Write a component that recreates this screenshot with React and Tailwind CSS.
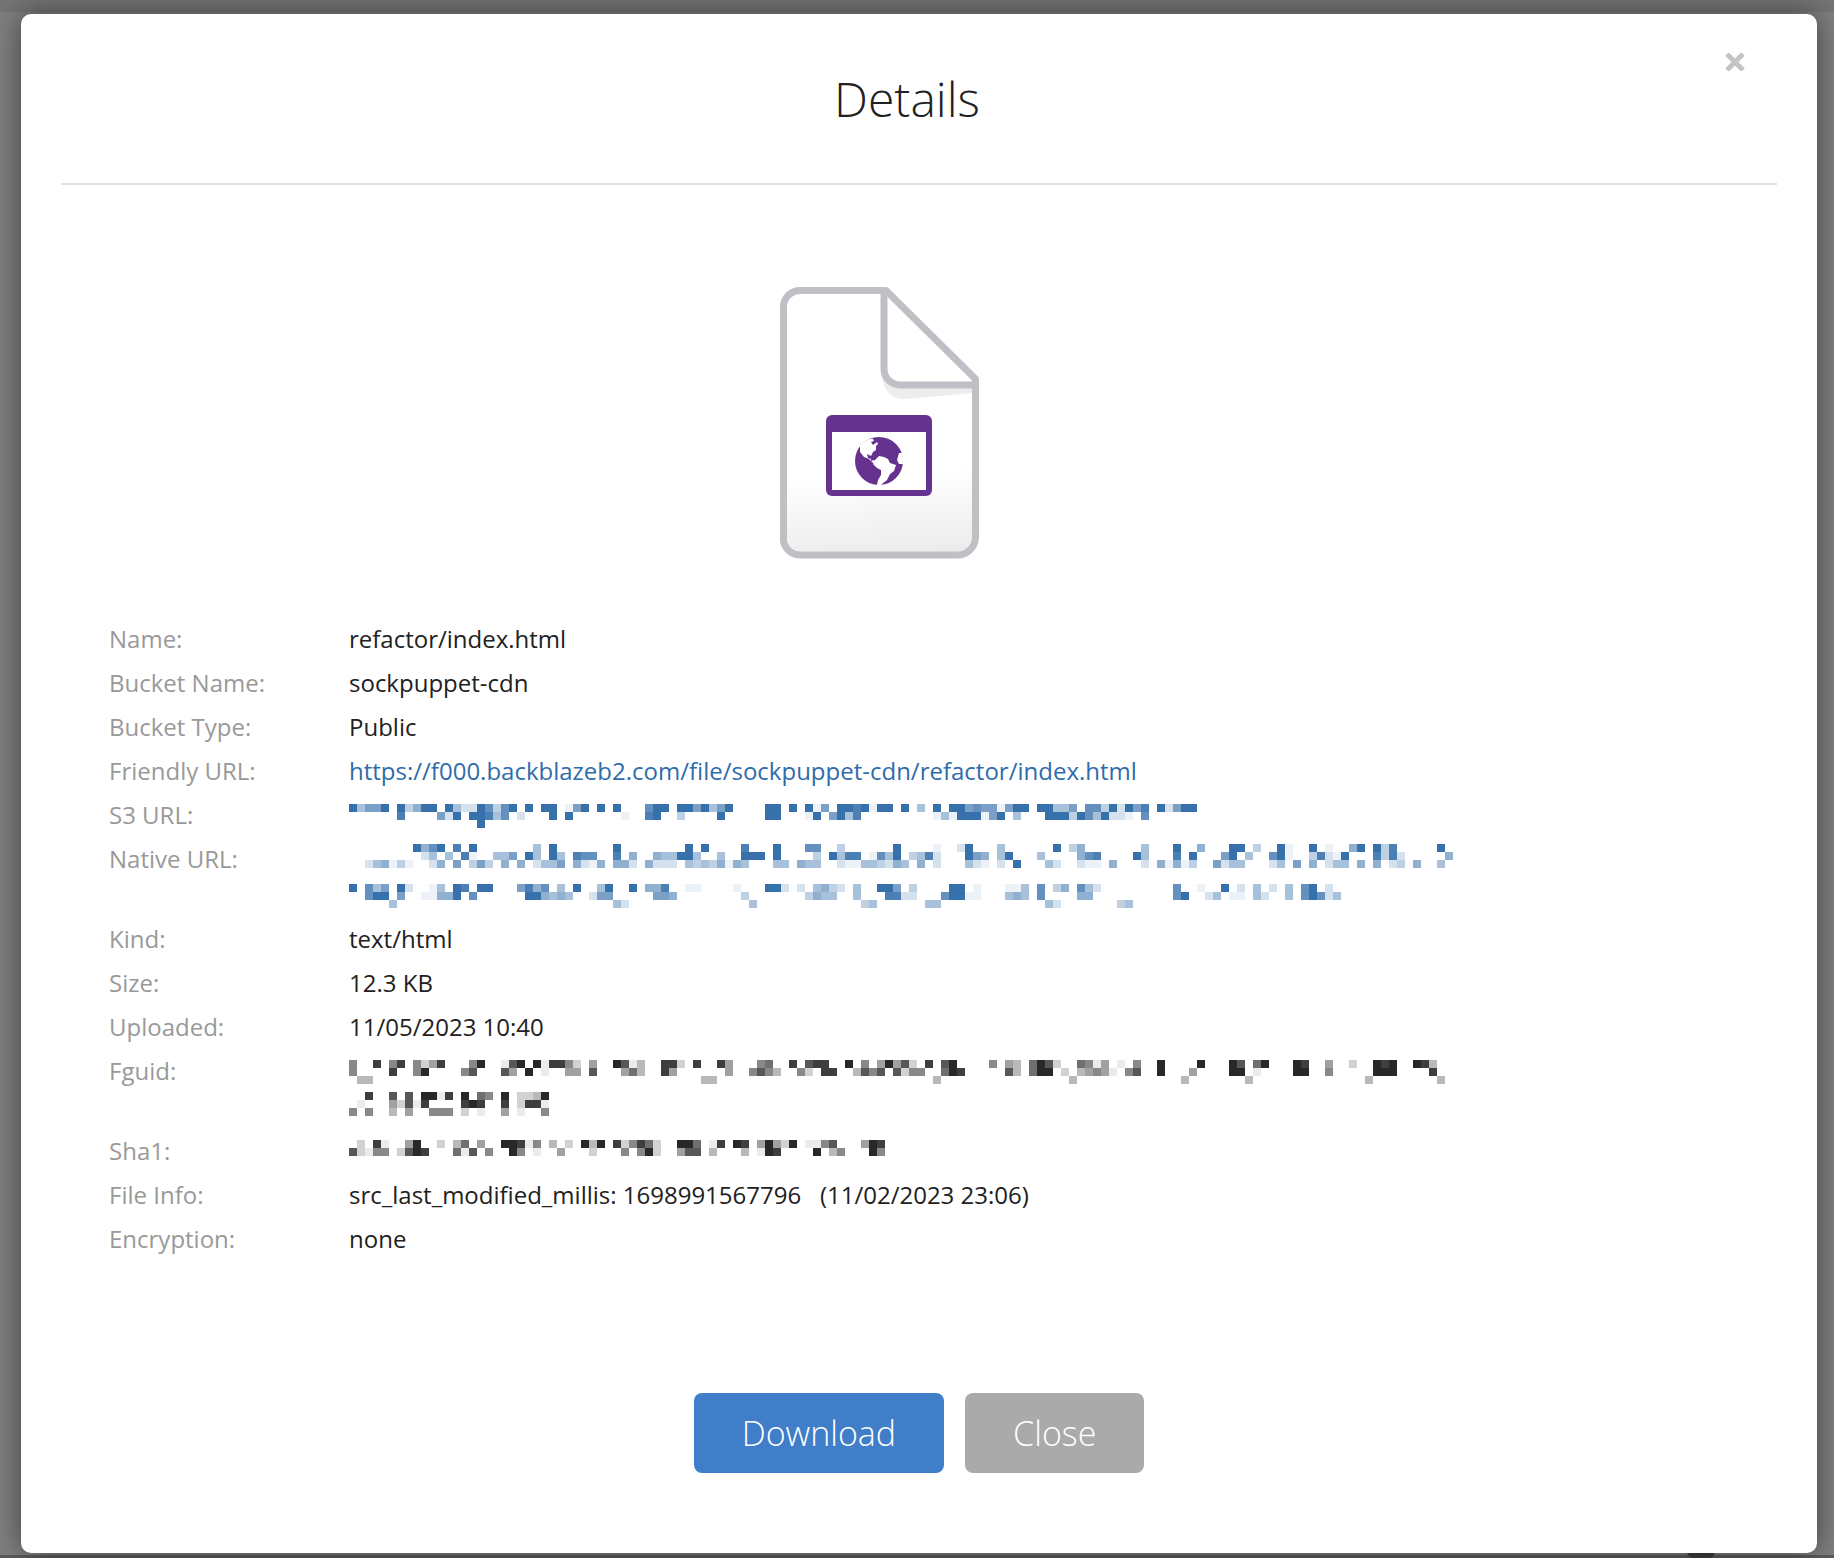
const CELL = 8;

// Each mosaic row is a list of "column:levels" runs; a level from 1 to 9 is the strength of one cell.
const S3_ROWS = [
  "0:94669 6:93599 12:942297379 22:9 24:99 27:169 31:9 33:9 37:799 41:9969469 52:99 55:9 57:916 61:9989199 69:9 71:4 73:9 75:9967661699 86:99446 92:77392968 101:92699",
  "6:8 11:629 15:99847.2 25:9 27:9 34:1 37:89 41:3 46:9 52:99 57:19 60:6948 73:141999169 83:4 87:999397492.1 96:2 99:7",
  "16:9",
];

const NATIVE_ROWS = [
  "8:9579 13:8 15:9 23:4 25:9 33:9 42:9 44:9 49:8 53:9 57:77 61:3 68:9 73:1 76:29 81:4 88:9 90:35 99:4 103:9 106:5 110:99 113:3 116:91 120:9 122:1 125:59 128:938 136:9",
  "9:24 12:4 14:81 18:446 22:94 25:94 28:877 33:8 35:5 38:544994 46:4 49:999 53:9 58:3 60:9488 65:1749 70:3482 77:965 81:49 86:4 91:578 98:94 103:8 105:9 109:69 112:4 115:791 120:38219 128:8382 137:5",
  "2:245131 10:25 13:6 15:363 19:5 21:5 23:2446 28:5215 33:552 37:5222 42:43435154 53:44 56:544 61:211443254 71:5 73:2 77:421 81:2 83:9 87:42 91:211 95:5 99:2 101:51513 108:6244 115:24 118:6 120:5 122:244 126:5 128:5.23 133:5 136:4",
  "",
  "",
  "0:9 2:746 6:92 10:14 13:98 16:99 21:6857 26:4 28:9 31:49 35:9 37:558 42:11 48:1 52:992 56:2 58:4532 63:4 66:996 70:3 75:99 78:1 82:114 86:7 88:35 91:742 103:7 106:1 109:9 111:2 113:4 115:2 117:4 119:79 122:2",
  "2:799 6:6 9:11559 15:7 22:995454 30:266 38:665 49:3 57:3544 63:4 67:8822 74:79911 82:454 86:7 91:55 103:79 107:24 110:11 113:42 117:4 119:79724",
  "5:4 33:42 50:4 64:34 72:44 87:42 96:34",
];

const FGUID_ROWS = [
  "0:5 3:8 5:58 8:5248 15:59 19:179.918852 30:4 33:9713 39:882 43:8 46:84 51:56 55:8 57:788 62:9 64:5 66:49472 72:8 74:79 80:5 82:43 85:6972 91:6514 96:1 98:5 101:9 106:9 110:97 113:69 118:98 122:4 125:2 128:989 133:983",
  "0:5 5:8 8:59 14:57 19:74.9.1 27:44 30:7 34:463 39:84 47:4 50:5753 56:52.88 63:3757.7255 74:698 82:73 85:699 89:2 91:34541 97:57 101:9 105:4 110:99 113:1 118:99 122:5 128:999 135:8",
  "1:33 44:33 73:3 90:3 104:3 112:3 127:3 136:3",
  "",
  "2:8 5:7 7:7 9:9918 14:9.65 19:9 21:2239",
  "1:1 5:42718 14:898 19:8 21:2881",
  "0:5 2:5 5:3 7:4 10:555 14:2 16:1 19:4 21:1 24:5",
];

const SHA1_ROWS = [
  "1:2 3:81 7:49 11:2 13:36 16:4 19:99815 25:3 27:2 29:939 33:825862 41:996 45:18 48:98 51:49429 57:1157 64:498",
  "0:72155 6:2798 13:617 17:5 20:95 23:1 26:4 30:2 34:5.592 41:477 45:3 49:3 51:198 58:9 60:35 65:95",
];

function Mosaic({ rows, columns, className, label }) {
  const cells = [];
  rows.forEach((row, y) => {
    row.split(" ").filter(Boolean).forEach((run) => {
      const [start, levels] = run.split(":");
      [...levels].forEach((level, i) => {
        if (level !== ".") {
          cells.push({ x: Number(start) + i, y, level: Number(level) });
        }
      });
    });
  });
  return (
    <svg
      role="img"
      aria-label={label}
      width={columns * CELL}
      height={rows.length * CELL}
      shapeRendering="crispEdges"
      fill="currentColor"
      className={className}
    >
      {cells.map((c) => (
        <rect
          key={c.x + "-" + c.y}
          x={c.x * CELL}
          y={c.y * CELL}
          width={CELL}
          height={CELL}
          fillOpacity={c.level === 9 ? 0.97 : c.level / 9 - 0.02}
        />
      ))}
    </svg>
  );
}

function FileIcon() {
  return (
    <svg width="200" height="272" viewBox="0 0 200 272" fill="none" role="img" aria-label="HTML file">
      <defs>
        <linearGradient id="page" x1="90" y1="0" x2="110" y2="272" gradientUnits="userSpaceOnUse">
          <stop offset="0.68" stopColor="#ffffff" />
          <stop offset="1" stopColor="#ebebec" />
        </linearGradient>
      </defs>
      <path
        d="M20 3.5H106L196 93V250a18 18 0 0 1-18 18H20A16 16 0 0 1 3.500 250V20A16 16 0 0 1 20 3.500Z"
        fill="url(#page)"
      />
      <path d="M101 86C103 103 111 113 126 112L192 106V98H120Z" fill="#ededee" />
      <path d="M104 4V83a15 15 0 0 0 15 15H195V93L106 4Z" fill="#fff" />
      <g stroke="#c0bfc5" strokeWidth="7" strokeLinejoin="round">
        <path d="M20 3.500H106L195.500 92V250a18 18 0 0 1-18 18H20A16.500 16.500 0 0 1 3.500 250V20A16.500 16.500 0 0 1 20 3.500Z" />
        <path d="M104 4V82a16 16 0 0 0 16 16H195" />
      </g>
      <rect x="46" y="128" width="106" height="81" rx="6" fill="#65338f" />
      <rect x="52" y="145" width="94" height="58" fill="#fff" />
      <circle cx="99" cy="174" r="24" fill="#65338f" />
      <g fill="#fff">
        <path d="M80 159C84 154 90 151 93 152L94 154L91 155L93 158L97 155L98 157L96 159V163L93 165L91 169L87 167L88 171L91 172V174L94 173L96 175L93 176L89 172L84 170L80 165Z" />
        <path d="M95 173L99 169L104 170L108 172L110 176L116 178L114 184L110 187L107 193L102 197L98 202H96L98 193L101 188V183L97 181L93 177Z" />
        <path d="M119 166H122L123 171V177H119L117 173Z" />
      </g>
    </svg>
  );
}

const DETAILS = [
  ["Name:", "refactor/index.html"],
  ["Bucket Name:", "sockpuppet-cdn"],
  ["Bucket Type:", "Public"],
  [
    "Friendly URL:",
    <a href="#friendly-url" className="text-[#2f6cab]">
      https://f000.backblazeb2.com/file/sockpuppet-cdn/refactor/index.html
    </a>,
  ],
  [
    "S3 URL:",
    <a href="#s3-url" className="block h-9 pt-[7px] text-[#316ca9]">
      <Mosaic rows={S3_ROWS} columns={106} label="Hidden S3 URL" className="block" />
    </a>,
  ],
  [
    "Native URL:",
    <a href="#native-url" className="block h-18 pt-[3px] text-[#316ca9]">
      <Mosaic rows={NATIVE_ROWS} columns={138} label="Hidden native URL" className="block" />
    </a>,
  ],
  ["Kind:", "text/html"],
  ["Size:", "12.3 KB"],
  ["Uploaded:", "11/05/2023 10:40"],
  [
    "Fguid:",
    <div className="h-18 pt-[7px]">
      <Mosaic rows={FGUID_ROWS} columns={137} label="Hidden Fguid" className="block" />
    </div>,
  ],
  [
    "Sha1:",
    <div className="h-9 pt-[7px]">
      <Mosaic rows={SHA1_ROWS} columns={67} label="Hidden Sha1" className="block" />
    </div>,
  ],
  ["File Info:", "src_last_modified_millis: 1698991567796 \u00a0 (11/02/2023 23:06)"],
  ["Encryption:", "none"],
];

export default function App() {
  return (
    <div className="relative min-h-screen overflow-hidden bg-[#808080] pt-3.5 pr-[17px] pb-[5px] pl-[21px] font-['Open_Sans','Noto_Sans',sans-serif] text-[#212121]">
      <div className="absolute inset-x-0 top-0 h-3 bg-[#757575]" />
      <div className="absolute inset-x-0 bottom-0 h-[3px] bg-[#5c5c5c]" />
      <div className="absolute right-[118px] -bottom-1 size-[30px] rounded-full bg-[#3e3e3e]" />

      <div
        role="dialog"
        aria-labelledby="details-title"
        className="relative rounded-[10px] bg-white px-10 pb-20 shadow-[0_0_30px_rgba(0,0,0,0.5)]"
      >
        <button type="button" aria-label="Close dialog" className="absolute top-[35px] right-[68px] p-1 text-[#c4c4c4]">
          <svg width="20" height="18" viewBox="0 0 20 18" fill="none" stroke="currentColor" strokeWidth="5">
            <path d="M2 1L18 17M18 1L2 17" />
          </svg>
        </button>

        <header className="border-b-2 border-[#e0e0e0] pt-[50px] pr-6 pb-[49px]">
          <h1 id="details-title" className="text-center text-[48px] leading-[70px] font-light">
            Details
          </h1>
        </header>

        <div className="flex justify-center pt-[102px] pr-[78px]">
          <FileIcon />
        </div>

        <table className="mt-[58px] ml-12 border-collapse text-left text-[24px] leading-9">
          <tbody>
            {DETAILS.map(([label, value]) => (
              <tr key={label} className="align-top">
                <th scope="row" className="w-60 py-1 font-normal text-[#999999]">
                  {label}
                </th>
                <td className="py-1">{value}</td>
              </tr>
            ))}
          </tbody>
        </table>

        <div className="mt-[132px] flex justify-center gap-[21px] text-[34px] font-light text-white">
          <button type="button" className="h-20 rounded-lg bg-[#407ec9] px-12">
            Download
          </button>
          <button type="button" className="h-20 rounded-lg bg-[#aaaaaa] px-12">
            Close
          </button>
        </div>
      </div>
    </div>
  );
}
